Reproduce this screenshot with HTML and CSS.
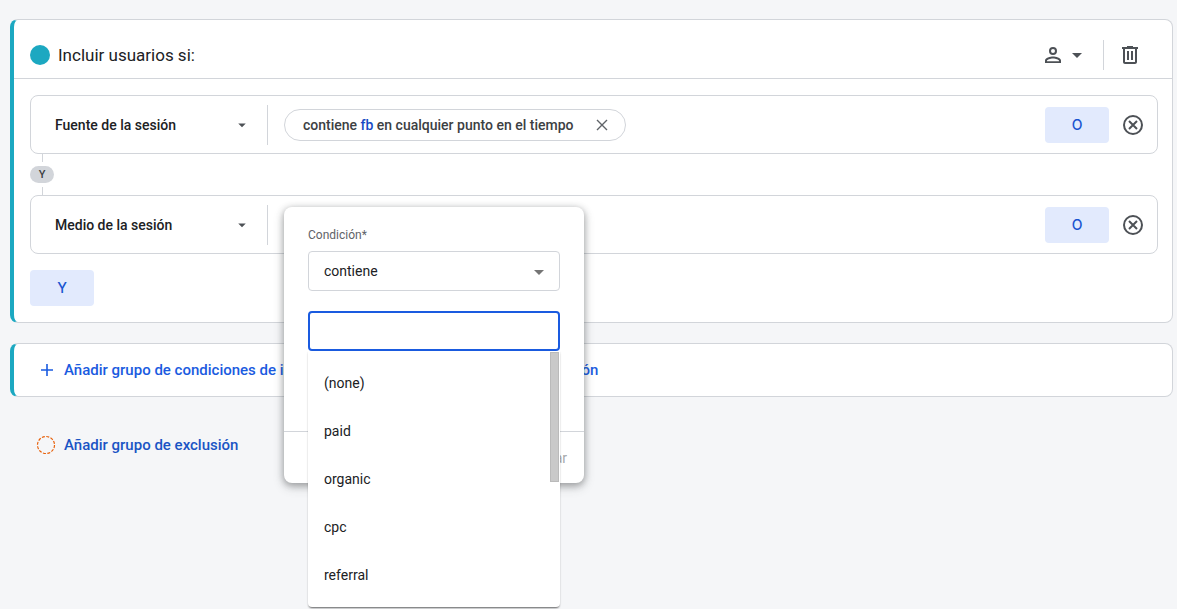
FILE: index.html
```html
<!DOCTYPE html>
<html lang="es">
<head>
<meta charset="utf-8">
<title>Incluir usuarios</title>
<link rel="stylesheet" href="styles.css">
</head>
<body>
<main class="page">
  <section class="card">
    <header class="card-header">
      <span class="dot"></span>
      <h2 class="card-title">Incluir usuarios si:</h2>
      <button class="scope" type="button" aria-label="Ámbito">
        <svg width="24" height="24" viewBox="0 0 24 24"><path d="M12 4a4 4 0 1 0 0 8 4 4 0 0 0 0-8zm0 2a2 2 0 1 1 0 4 2 2 0 0 1 0-4zm0 7.500c-2.700 0-8 1.300-8 4V20h16v-2.500c0-2.700-5.300-4-8-4zm6 4.700H6v-.700c.200-.700 3.300-2 6-2s5.800 1.300 6 2z"/></svg>
        <svg width="24" height="24" viewBox="0 0 24 24"><path d="M7 10l5 5 5-5z"/></svg>
      </button>
      <span class="divider"></span>
      <button class="icon-button" type="button" aria-label="Eliminar">
        <svg width="24" height="24" viewBox="0 0 24 24"><path d="M15 4V3H9v1H4v2h1v13c0 1.100.900 2 2 2h10c1.100 0 2-.900 2-2V6h1V4h-5zm2 15H7V6h10v13zM9 8h2v9H9zm4 0h2v9h-2z"/></svg>
      </button>
    </header>
    <div class="card-body">
      <div class="condition">
        <div class="field">
          <select class="field-select" aria-label="Dimensión"><option>Fuente de la sesión</option></select>
          <svg class="field-arrow" width="18" height="18" viewBox="0 0 24 24"><path d="M7 10l5 5 5-5z"/></svg>
        </div>
        <div class="value">
          <span class="chip">
            <span>contiene <b class="term">fb</b> en cualquier punto en el tiempo</span>
            <button class="chip-remove" type="button" aria-label="Quitar">
              <svg width="18" height="18" viewBox="0 0 18 18"><path class="stroke" d="M4 4l10 10M14 4L4 14"/></svg>
            </button>
          </span>
        </div>
        <button class="tonal" type="button">O</button>
        <button class="icon-button" type="button" aria-label="Quitar condición">
          <svg width="24" height="24" viewBox="0 0 24 24"><path class="stroke-bold" d="M8 8l8 8M16 8l-8 8"/><circle class="stroke-bold" cx="12" cy="12" r="9"/></svg>
        </button>
      </div>
      <div class="joiner"><span class="stem"></span><span class="pill">Y</span><span class="stem"></span></div>
      <div class="condition">
        <div class="field">
          <select class="field-select" aria-label="Dimensión"><option>Medio de la sesión</option></select>
          <svg class="field-arrow" width="18" height="18" viewBox="0 0 24 24"><path d="M7 10l5 5 5-5z"/></svg>
        </div>
        <div class="value">
          <div class="popover">
            <div class="popover-body">
              <label class="label" for="operator">Condición*</label>
              <div class="outlined">
                <select class="outlined-select" id="operator"><option>contiene</option></select>
                <svg class="outlined-arrow" width="24" height="24" viewBox="0 0 24 24"><path d="M7 10l5 5 5-5z"/></svg>
              </div>
              <div class="combo">
                <input class="combo-input" type="text" role="combobox" aria-label="Valor" aria-expanded="true" aria-controls="values">
                <ul class="options" id="values" role="listbox">
                  <li class="option" role="option">(none)</li>
                  <li class="option" role="option">paid</li>
                  <li class="option" role="option">organic</li>
                  <li class="option" role="option">cpc</li>
                  <li class="option" role="option">referral</li>
                  <li class="thumb" role="presentation"></li>
                </ul>
              </div>
            </div>
            <div class="popover-footer"><button class="apply" type="button" disabled>Aplicar</button></div>
          </div>
        </div>
        <button class="tonal" type="button">O</button>
        <button class="icon-button" type="button" aria-label="Quitar condición">
          <svg width="24" height="24" viewBox="0 0 24 24"><path class="stroke-bold" d="M8 8l8 8M16 8l-8 8"/><circle class="stroke-bold" cx="12" cy="12" r="9"/></svg>
        </button>
      </div>
      <button class="tonal add" type="button">Y</button>
    </div>
  </section>
  <section class="card actions">
    <button class="link bright" type="button">
      <svg width="18" height="18" viewBox="0 0 18 18"><path class="stroke-blue" d="M9 3v12M3 9h12"/></svg>
      <span>Añadir grupo de condiciones de inclusión</span>
    </button>
    <button class="link bright" type="button">
      <span>Añadir secuencia de inclusión</span>
    </button>
  </section>
  <div class="exclude">
    <button class="link" type="button">
      <svg width="20" height="20" viewBox="0 0 20 20"><circle class="dashed" cx="10" cy="10" r="8.500"/></svg>
      <span>Añadir grupo de exclusión</span>
    </button>
  </div>
</main>
</body>
</html>
```
FILE: styles.css
```css
* { box-sizing: border-box; }
body { min-height: 100vh; margin: 0; background: #f5f6f8; font: 500 14px/20px Roboto, sans-serif; color: #202124; }
button, select, input { font: inherit; color: inherit; margin: 0; }
button { padding: 0; border: 0; background: none; cursor: pointer; }
svg { display: block; flex: none; fill: #4d5156; }

.page { display: flex; flex-direction: column; gap: 20px; min-height: 100vh; padding: 19px 4px 0 10px; }
.card { background: #fff; border: 1px solid #d2d5da; border-left: 4px solid #1ca8c1; border-radius: 8px; }
.card-header { display: flex; align-items: center; min-height: 59px; padding: 12px 30px 0 16px; border-bottom: 1px solid #d2d5da; }
.dot { width: 20px; height: 20px; border-radius: 50%; background: #1ca8c1; }
.card-title { flex: 1; margin: 0 0 0 8px; font-size: 17px; line-height: 24px; font-weight: 400; }
.scope { display: flex; }
.divider { width: 1px; height: 30px; margin: 0 14px; background: #d2d5da; }
.card-body { padding: 16px 14px 16px 16px; }

.condition { display: flex; align-items: center; min-height: 59px; padding-right: 12px; border: 1px solid #d2d5da; border-radius: 8px; }
.field { position: relative; width: 237px; height: 40px; border-right: 1px solid #d2d5da; }
.field-select { width: 100%; height: 100%; padding: 0 40px 0 24px; border: 0; background: none; appearance: none; }
.field-arrow { position: absolute; right: 16px; top: 11px; pointer-events: none; }
.value { position: relative; flex: 1; align-self: stretch; display: flex; align-items: center; margin-left: 16px; }
.chip { display: flex; align-items: center; gap: 20px; height: 32px; padding: 0 14px 0 18px; border: 1px solid #d2d5da; border-radius: 16px; color: #3c4043; }
.term { font-weight: 500; color: #174ac4; }
.stroke { fill: none; stroke: #5f6368; stroke-width: 1.400; }
.stroke-bold { fill: none; stroke: #4d5156; stroke-width: 2; }
.tonal { width: 64px; height: 36px; border-radius: 4px; background: #e2eafd; color: #1a54d0; font-family: Inter, sans-serif; font-size: 14px; }
.condition .icon-button { margin-left: 12px; }
.add { display: block; margin-top: 16px; }

.joiner { display: flex; flex-direction: column; align-items: center; justify-content: space-between; width: 24px; height: 41px; }
.stem { width: 1px; height: 8px; background: #d2d5da; }
.pill { width: 24px; height: 17px; border-radius: 9px; background: #d2d5da; color: #3c4043; font-size: 11px; line-height: 17px; text-align: center; }

.popover { position: absolute; z-index: 2; left: 0; top: 11px; width: 300px; background: #fff; border-radius: 8px; box-shadow: 0 2px 6px 1px rgba(60, 64, 67, .35), 0 4px 12px rgba(60, 64, 67, .2); font-weight: 400; }
.popover-body { padding: 20px 24px 80px; }
.label { display: block; margin-bottom: 8px; font-size: 12px; line-height: 16px; color: #5f6368; }
.outlined { position: relative; }
.outlined-select { display: block; width: 100%; height: 40px; padding: 0 40px 0 15px; border: 1px solid #d2d5da; border-radius: 4px; background: #fff; appearance: none; }
.outlined-arrow { position: absolute; right: 9px; top: 9px; fill: #757575; pointer-events: none; }
.combo { position: relative; margin-top: 20px; }
.combo-input { display: block; width: 100%; height: 40px; padding: 0 14px; border: 2px solid #1a5be0; border-radius: 4px; background: #fff; outline: 0; }
.options { position: absolute; z-index: 1; top: 100%; left: 0; right: 0; margin: 0; padding: 8px 0; list-style: none; background: #fff; border-radius: 0 0 4px 4px; box-shadow: 0 2px 2px -1px rgba(0, 0, 0, .5), 0 1px 2px rgba(0, 0, 0, .15); }
.option { padding: 14px 16px; line-height: 20px; }
.thumb { position: absolute; top: 1px; right: 1px; width: 9px; height: 130px; background: #c9c9c9; border: 1px solid #bababa; }
.popover-footer { display: flex; justify-content: flex-end; padding: 16px 17px 15px; border-top: 1px solid #d2d5da; }
.apply { color: #a6a8ab; font-size: 14px; line-height: 20px; }

.actions { display: flex; align-items: center; gap: 58px; min-height: 54px; padding: 0 24px; }
.link { display: flex; align-items: center; gap: 8px; font-size: 15px; line-height: 20px; color: #1a54c4; white-space: nowrap; }
.bright { color: #1a5be0; }
.stroke-blue { fill: none; stroke: #1a5be0; stroke-width: 1.600; }
.exclude { padding: 18px 26px; }
.dashed { fill: none; stroke: #e8600a; stroke-width: 1.200; stroke-dasharray: 3 1.450; }
```
